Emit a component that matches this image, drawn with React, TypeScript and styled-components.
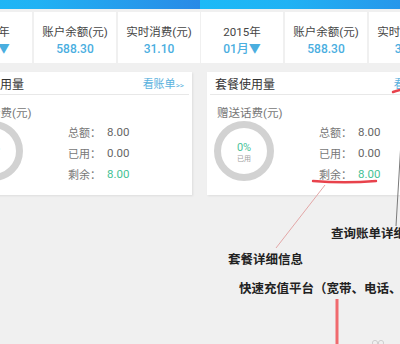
import React from 'react';
import styled, { createGlobalStyle } from 'styled-components';

const GlobalStyle = createGlobalStyle`
  html, body {
    margin: 0;
    padding: 0;
    background: #f0f0f0;
  }
  body {
    font-family: "Roboto", "Noto Sans CJK SC", sans-serif;
  }
`;

interface StatCell {
    label: string,
    value: string,
    dark?: boolean,
}

const cells: StatCell[] = [
    { label: '2015年', value: '01月▼' },
    { label: '账户余额(元)', value: '588.30' },
    { label: '实时消费(元)', value: '31.10' },
];

const stats = [
    { label: '总额：', value: '8.00', green: false },
    { label: '已用：', value: '0.00', green: false },
    { label: '剩余：', value: '8.00', green: true },
];

const Screen = () => {
    return (
        <ScreenWrap>
            <TopBar />
            <CellRow>
                {cells.map((c, i) => (
                    <Cell key={c.label}>
                        <CellLabel>{c.label}</CellLabel>
                        <CellValue>{c.value}</CellValue>
                    </Cell>
                ))}
            </CellRow>
            <Card>
                <CardHeader>
                    <CardTitle>套餐使用量</CardTitle>
                    <BillLink>看账单<small>&gt;&gt;</small></BillLink>
                </CardHeader>
                <CardBody>
                    <LeftCol>
                        <SubTitle>赠送话费(元)</SubTitle>
                        <Donut>
                            <svg width="60" height="60" viewBox="0 0 60 60">
                                <circle cx="30" cy="30" r="26.5" fill="none" stroke="#d2d2d2" strokeWidth="7" />
                            </svg>
                            <DonutText>
                                <Percent>0%</Percent>
                                <Used>已用</Used>
                            </DonutText>
                        </Donut>
                    </LeftCol>
                    <Stats>
                        {stats.map((s) => (
                            <StatRow key={s.label}>
                                <StatLabel>{s.label}</StatLabel>
                                <StatValue $green={s.green}>{s.value}</StatValue>
                            </StatRow>
                        ))}
                    </Stats>
                </CardBody>
            </Card>
        </ScreenWrap>
    );
};

const App = () => {
    return (
        <>
            <GlobalStyle />
            <Stage>
                <Half>
                    <Shift $x={-51}>
                        <Screen />
                    </Shift>
                </Half>
                <Half>
                    <Shift $x={0}>
                        <Screen />
                    </Shift>
                </Half>
                <Lines width="400" height="344" viewBox="0 0 400 344">
                    <path d="M313 181 Q345 183.5 376 181" stroke="#e8424c" strokeWidth="2.4" fill="none" strokeLinecap="round" />
                    <path d="M393 92 Q396 91 400 90" stroke="#e8424c" strokeWidth="2.4" fill="none" strokeLinecap="round" />
                    <line x1="325" y1="185" x2="276" y2="248" stroke="#e3a7a7" strokeWidth="1" />
                    <line x1="400.5" y1="150" x2="396" y2="226" stroke="#7a7a7a" strokeWidth="1" />
                    <line x1="337" y1="299" x2="337" y2="344" stroke="#f06a6e" strokeWidth="3" />
                    <circle cx="375" cy="343" r="2.6" stroke="#cfcfcf" strokeWidth="1" fill="none" />
                    <circle cx="381" cy="343" r="2.6" stroke="#cfcfcf" strokeWidth="1" fill="none" />
                </Lines>
                <Note $x={331} $y={225}>查询账单详细</Note>
                <Note $x={228} $y={251}>套餐详细信息</Note>
                <Note $x={239} $y={280}>快速充值平台（宽带、电话、</Note>
            </Stage>
        </>
    );
};

export default App;

const Stage = styled.div`
  position: relative;
  width: 400px;
  height: 344px;
  display: flex;
  overflow: hidden;
  background: #f0f0f0;
`;

const Half = styled.div`
  width: 200px;
  height: 344px;
  overflow: hidden;
  flex: none;
`;

const Shift = styled.div<{ $x: number }>`
  margin-left: ${p => p.$x}px;
`;

const ScreenWrap = styled.div`
  width: 251px;
  height: 344px;
  padding-left: 1px;
  box-sizing: border-box;
  background: #f0f0f0;
  display: flex;
  flex-direction: column;
`;

const TopBar = styled.div`
  height: 9px;
  margin-left: -1px;
  background: linear-gradient(90deg, #1cbaf7 0%, #20b2f4 35%, #2a8ae6 100%);
`;

const CellRow = styled.div`
  display: flex;
  gap: 2px;
  margin-top: 3px;
`;

const Cell = styled.div`
  width: 82px;
  height: 51px;
  flex: none;
  background: #fff;
  display: flex;
  flex-direction: column;
  align-items: center;
  padding-top: 12px;
  box-sizing: border-box;
`;

const CellLabel = styled.div`
  font-size: 11.5px;
  line-height: 16px;
  color: #454545;
`;

const CellValue = styled.div`
  font-size: 12px;
  line-height: 16px;
  margin-top: 1px;
  color: #4aaedf;
  font-weight: 500;
`;

const Card = styled.div`
  margin: 9px 8px 0 6px;
  height: 123px;
  background: #fff;
  box-shadow: 1px 1px 2px rgba(0, 0, 0, 0.08);
  display: flex;
  flex-direction: column;
`;

const CardHeader = styled.div`
  height: 22px;
  margin: 0 3px;
  padding: 0 5px;
  border-bottom: 1px solid #e8e8e8;
  display: flex;
  align-items: center;
  justify-content: space-between;
`;

const CardTitle = styled.div`
  font-size: 12px;
  color: #333;
`;

const BillLink = styled.div`
  font-size: 11px;
  color: #5ab2de;
  small {
    font-size: 8px;
  }
`;

const CardBody = styled.div`
  display: flex;
  padding: 10px 0 0 7px;
`;

const LeftCol = styled.div`
  width: 105px;
  display: flex;
  flex-direction: column;
`;

const SubTitle = styled.div`
  margin-left: 3px;
  font-size: 11.5px;
  line-height: 16px;
  color: #777;
`;

const Donut = styled.div`
  position: relative;
  width: 60px;
  height: 60px;
  svg {
    display: block;
  }
`;

const DonutText = styled.div`
  position: absolute;
  inset: 0;
  display: flex;
  flex-direction: column;
  align-items: center;
  justify-content: center;
  padding-top: 2px;
`;

const Percent = styled.div`
  font-size: 11px;
  line-height: 13px;
  color: #4cc39a;
`;

const Used = styled.div`
  font-size: 7px;
  line-height: 10px;
  color: #a0a0a0;
`;

const Stats = styled.div`
  padding-top: 16px;
  display: flex;
  flex-direction: column;
`;

const StatRow = styled.div`
  height: 21px;
  display: flex;
  align-items: center;
`;

const StatLabel = styled.div`
  width: 39px;
  font-size: 11px;
  color: #777;
`;

const StatValue = styled.div<{ $green: boolean }>`
  font-size: 11.5px;
  color: ${p => (p.$green ? '#45c295' : '#666')};
`;

const Lines = styled.svg`
  position: absolute;
  left: 0;
  top: 0;
  pointer-events: none;
`;

const Note = styled.div<{ $x: number, $y: number }>`
  position: absolute;
  left: ${p => p.$x}px;
  top: ${p => p.$y}px;
  font-family: "Noto Sans CJK SC", sans-serif;
  font-weight: 700;
  font-size: 12.5px;
  line-height: 16px;
  color: #222;
  white-space: nowrap;
`;
